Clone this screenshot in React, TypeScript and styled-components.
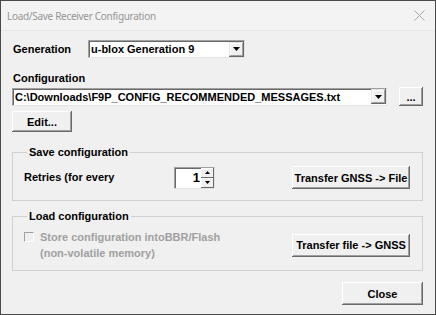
import styled, { createGlobalStyle } from 'styled-components'

const GlobalStyle = createGlobalStyle`
  html, body {
    margin: 0;
    padding: 0;
    background: #ffffff;
  }
  body {
    font-family: 'Liberation Sans', Arial, sans-serif;
  }
`

const Window = styled.div`
  box-sizing: border-box;
  width: 436px;
  height: 315px;
  border: 1px solid #4a4a4a;
  background: #f0f0f0;
  display: flex;
  flex-direction: column;
  font-family: 'Liberation Sans', Arial, sans-serif;
  font-size: 11px;
  font-weight: bold;
  color: #000;
`

const TitleBar = styled.div`
  height: 29px;
  flex: none;
  display: flex;
  align-items: center;
  justify-content: space-between;
  padding: 0 8px 0 6px;
  background: #f3f3f3;
  border-bottom: 1px solid #e6e6e6;
`

const Title = styled.span`
  font-family: 'Noto Sans', sans-serif;
  font-weight: normal;
  font-size: 10px;
  color: #969696;
  letter-spacing: -0.3px;
`

const CloseIcon = styled.svg`
  width: 11px;
  height: 11px;
  margin-right: 2px;
`

const Body = styled.div`
  flex: 1;
  display: flex;
  flex-direction: column;
  padding: 0 12px 0 11px;
`

const Row = styled.div<{ $top?: number }>`
  display: flex;
  align-items: center;
  margin-top: ${({ $top }) => $top ?? 0}px;
`

const Label = styled.div<{ $width?: number; $top?: number }>`
  width: ${({ $width }) => ($width ? `${$width}px` : 'auto')};
  margin-top: ${({ $top }) => $top ?? 0}px;
  line-height: 13px;
  padding-left: 1px;
`

const Combo = styled.div<{ $width: number }>`
  box-sizing: border-box;
  width: ${({ $width }) => $width}px;
  height: 18px;
  background: #fff;
  border-top: 1px solid #a0a0a0;
  border-left: 1px solid #a0a0a0;
  border-right: 1px solid #e3e3e3;
  border-bottom: 1px solid #e3e3e3;
  box-shadow: inset 1px 1px 0 #696969;
  display: flex;
  align-items: center;
  padding: 0 0 0 2px;
`

const ComboText = styled.span`
  flex: 1;
  white-space: nowrap;
  overflow: hidden;
  line-height: 14px;
`

const ArrowButton = styled.div`
  box-sizing: border-box;
  width: 15px;
  height: 15px;
  background: #f0f0f0;
  box-shadow: inset -1px -1px 0 #696969, inset 1px 1px 0 #e3e3e3,
    inset -2px -2px 0 #a0a0a0, inset 2px 2px 0 #fff;
  display: flex;
  align-items: center;
  justify-content: center;
`

const Button = styled.button<{ $width: number; $height: number }>`
  box-sizing: border-box;
  width: ${({ $width }) => $width}px;
  height: ${({ $height }) => $height}px;
  padding: 0;
  border: none;
  background: #f0f0f0;
  font: inherit;
  color: #000;
  box-shadow: inset -1px -1px 0 #696969, inset 1px 1px 0 #ffffff,
    inset -2px -2px 0 #a0a0a0, inset 2px 2px 0 #f0f0f0;
  white-space: nowrap;
`

const Group = styled.fieldset<{ $top: number; $height: number }>`
  box-sizing: border-box;
  margin: ${({ $top }) => $top}px 0 0 0;
  height: ${({ $height }) => $height}px;
  border: 1px solid #d0d0d0;
  padding: 0 12px 0 10px;
  display: flex;
  flex-direction: column;
`

const Legend = styled.legend`
  padding: 0 2px;
  margin-left: 4px;
  line-height: 13px;
`

const GroupRow = styled.div<{ $top: number }>`
  display: flex;
  align-items: center;
  margin-top: ${({ $top }) => $top}px;
`

const Spinner = styled.div`
  box-sizing: border-box;
  width: 41px;
  height: 22px;
  margin-left: auto;
  margin-right: 77px;
  background: #fff;
  border-top: 1px solid #a0a0a0;
  border-left: 1px solid #a0a0a0;
  border-right: 1px solid #e3e3e3;
  border-bottom: 1px solid #e3e3e3;
  box-shadow: inset 1px 1px 0 #696969;
  display: flex;
  align-items: stretch;
`

const SpinValue = styled.span`
  flex: 1;
  text-align: right;
  font-size: 13px;
  line-height: 20px;
  padding-right: 1px;
`

const SpinButtons = styled.div`
  width: 13px;
  display: flex;
  flex-direction: column;
`

const SpinHalf = styled.div`
  flex: 1;
  background: #f0f0f0;
  box-shadow: inset -1px -1px 0 #696969, inset 1px 1px 0 #fff;
  display: flex;
  align-items: center;
  justify-content: center;
`

const CheckArea = styled.div`
  display: flex;
  align-items: flex-start;
  color: #a0a0a0;
  flex: 1;
`

const CheckBox = styled.div`
  box-sizing: border-box;
  width: 10px;
  height: 10px;
  margin: 3px 6px 0 1px;
  border-top: 1px solid #a0a0a0;
  border-left: 1px solid #a0a0a0;
  border-right: 1px solid #fff;
  border-bottom: 1px solid #fff;
  background: #f0f0f0;
`

const CheckText = styled.div`
  line-height: 16px;
`

const Footer = styled.div`
  display: flex;
  justify-content: flex-end;
  margin-top: 11px;
`

const Arrow = ({ up }: { up?: boolean }) => (
  <svg width="7" height="4" viewBox="0 0 7 4">
    <path d={up ? 'M3.5 0 L7 4 L0 4 Z' : 'M0 0 L7 0 L3.5 4 Z'} fill="#000" />
  </svg>
)

const SmallArrow = ({ up }: { up?: boolean }) => (
  <svg width="5" height="3" viewBox="0 0 5 3">
    <path d={up ? 'M2.5 0 L5 3 L0 3 Z' : 'M0 0 L5 0 L2.5 3 Z'} fill="#000" />
  </svg>
)

export default function App() {
  return (
    <>
      <GlobalStyle />
      <Window>
        <TitleBar>
          <Title>Load/Save Receiver Configuration</Title>
          <CloseIcon viewBox="0 0 11 11">
            <path d="M0.5 0.5 L10.5 10.5 M10.5 0.5 L0.5 10.5" stroke="#a6a6a6" strokeWidth="1" />
          </CloseIcon>
        </TitleBar>
        <Body>
          <Row $top={9}>
            <Label $width={75}>Generation</Label>
            <Combo $width={157}>
              <ComboText>u-blox Generation 9</ComboText>
              <ArrowButton>
                <Arrow />
              </ArrowButton>
            </Combo>
          </Row>
          <Label $top={14}>Configuration</Label>
          <Row $top={2}>
            <Combo $width={375}>
              <ComboText>C:\Downloads\F9P_CONFIG_RECOMMENDED_MESSAGES.txt</ComboText>
              <ArrowButton>
                <Arrow />
              </ArrowButton>
            </Combo>
            <Button $width={24} $height={19} style={{ marginLeft: 12 }}>
              ...
            </Button>
          </Row>
          <Row $top={5}>
            <Button $width={60} $height={21}>
              Edit...
            </Button>
          </Row>
          <Group $top={14} $height={55}>
            <Legend>Save configuration</Legend>
            <GroupRow $top={7}>
              <Label>Retries (for every</Label>
              <Spinner>
                <SpinValue>1</SpinValue>
                <SpinButtons>
                  <SpinHalf>
                    <SmallArrow up />
                  </SpinHalf>
                  <SpinHalf>
                    <SmallArrow />
                  </SpinHalf>
                </SpinButtons>
              </Spinner>
              <Button $width={118} $height={23}>
                Transfer GNSS -&gt; File
              </Button>
            </GroupRow>
          </Group>
          <Group $top={9} $height={61}>
            <Legend>Load configuration</Legend>
            <GroupRow $top={6}>
              <CheckArea>
                <CheckBox />
                <CheckText>
                  Store configuration intoBBR/Flash
                  <br />
                  (non-volatile memory)
                </CheckText>
              </CheckArea>
              <Button $width={118} $height={23}>
                Transfer file -&gt; GNSS
              </Button>
            </GroupRow>
          </Group>
          <Footer>
            <Button $width={81} $height={23}>
              Close
            </Button>
          </Footer>
        </Body>
      </Window>
    </>
  )
}
